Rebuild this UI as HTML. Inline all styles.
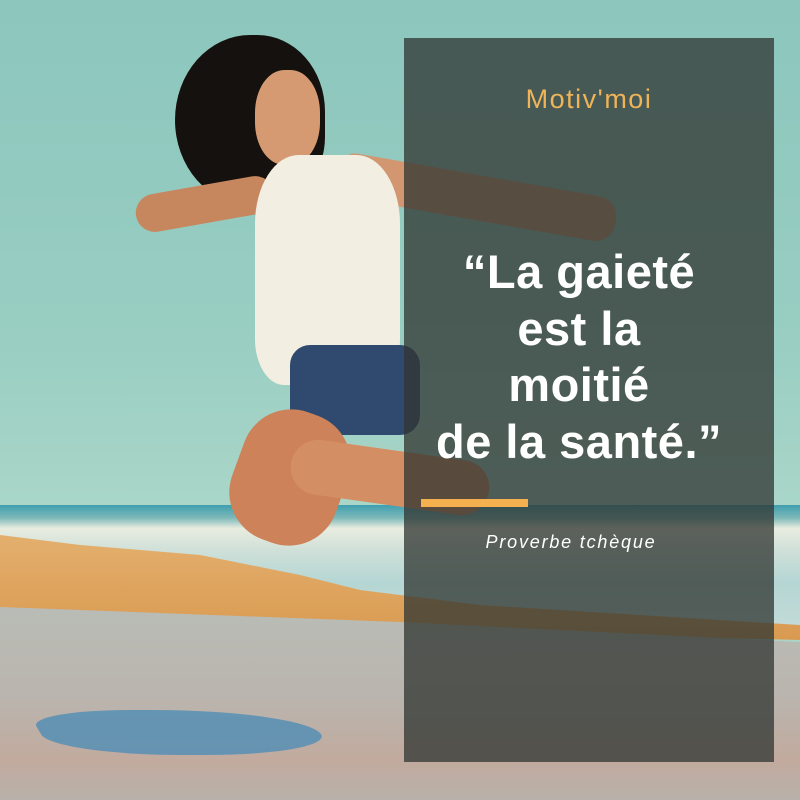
<!DOCTYPE html>
<html><head><meta charset="utf-8"><style>
body{margin:0;width:800px;height:800px;overflow:hidden;font-family:"Liberation Sans",sans-serif}
.s{position:relative;width:800px;height:800px;background:linear-gradient(#8cc6bd 0%,#98cdc2 40%,#a9d6c8 63%);overflow:hidden}
.a{position:absolute}
.box{left:404px;top:38px;width:370px;height:724px;background:rgba(48,54,50,0.76)}
.t{left:404px;width:370px;text-align:center}
</style></head><body><div class="s">
<!-- sea -->
<div class="a" style="left:0;top:505px;width:800px;height:130px;background:linear-gradient(#3f9fb0,#7fb9b9 10%,#e9ece0 18%,#cfe0d8 35%,#b5d6d4 60%,#c5dcd8)"></div>
<!-- sand dry -->
<div class="a" style="left:0;top:530px;width:800px;height:110px;background:linear-gradient(#e4b06f,#d99a50);clip-path:polygon(0 5px,80px 15px,200px 25px,300px 45px,360px 60px,480px 75px,800px 95px,800px 110px,0 90px)"></div>
<!-- wet sand -->
<div class="a" style="left:0;top:607px;width:800px;height:193px;background:linear-gradient(#b9bcb6,#bab4ad 50%,#c2aa9e 80%,#b8b1aa);clip-path:polygon(0 0,400px 15px,800px 35px,800px 193px,0 193px)"></div>
<div class="a" style="left:40px;top:710px;width:280px;height:45px;background:#4f8db5;border-radius:40% 60% 50% 50%;transform:skewX(30deg);opacity:.8"></div>
<!-- person -->
<div class="a" style="left:175px;top:35px;width:150px;height:170px;background:#14110e;border-radius:50% 45% 40% 50%"></div>
<div class="a" style="left:255px;top:70px;width:65px;height:95px;background:#d69a72;border-radius:45%"></div>
<div class="a" style="left:135px;top:185px;width:140px;height:38px;background:#c7875e;border-radius:20px;transform:rotate(-10deg)"></div>
<div class="a" style="left:335px;top:150px;width:285px;height:45px;background:#d29771;border-radius:20px;transform:rotate(10deg);transform-origin:left"></div>
<div class="a" style="left:255px;top:155px;width:145px;height:230px;background:#f2efe2;border-radius:30% 30% 20% 20%"></div>
<div class="a" style="left:290px;top:345px;width:130px;height:90px;background:#2f4a6e;border-radius:20px"></div>
<div class="a" style="left:235px;top:410px;width:110px;height:135px;background:#cd825a;border-radius:50px;transform:rotate(20deg)"></div>
<div class="a" style="left:290px;top:450px;width:200px;height:55px;background:#d48e63;border-radius:30px;transform:rotate(8deg)"></div>
<!-- overlay -->
<div class="a box"></div>
<div class="a t" style="top:84px;font-size:27px;letter-spacing:1.5px;color:#f0b458">Motiv'moi</div>
<div class="a t" style="top:244px;left:394px;font-size:47px;line-height:56.5px;font-weight:bold;color:#fff;letter-spacing:0.5px">“La gaieté<br>est la<br>moitié<br>de la santé.”</div>
<div class="a" style="left:421px;top:499px;width:107px;height:8px;background:#f5b04f"></div>
<div class="a t" style="top:532px;left:386px;font-size:18px;font-style:italic;color:#fff;letter-spacing:1.8px">Proverbe tchèque</div>
</div></body></html>
